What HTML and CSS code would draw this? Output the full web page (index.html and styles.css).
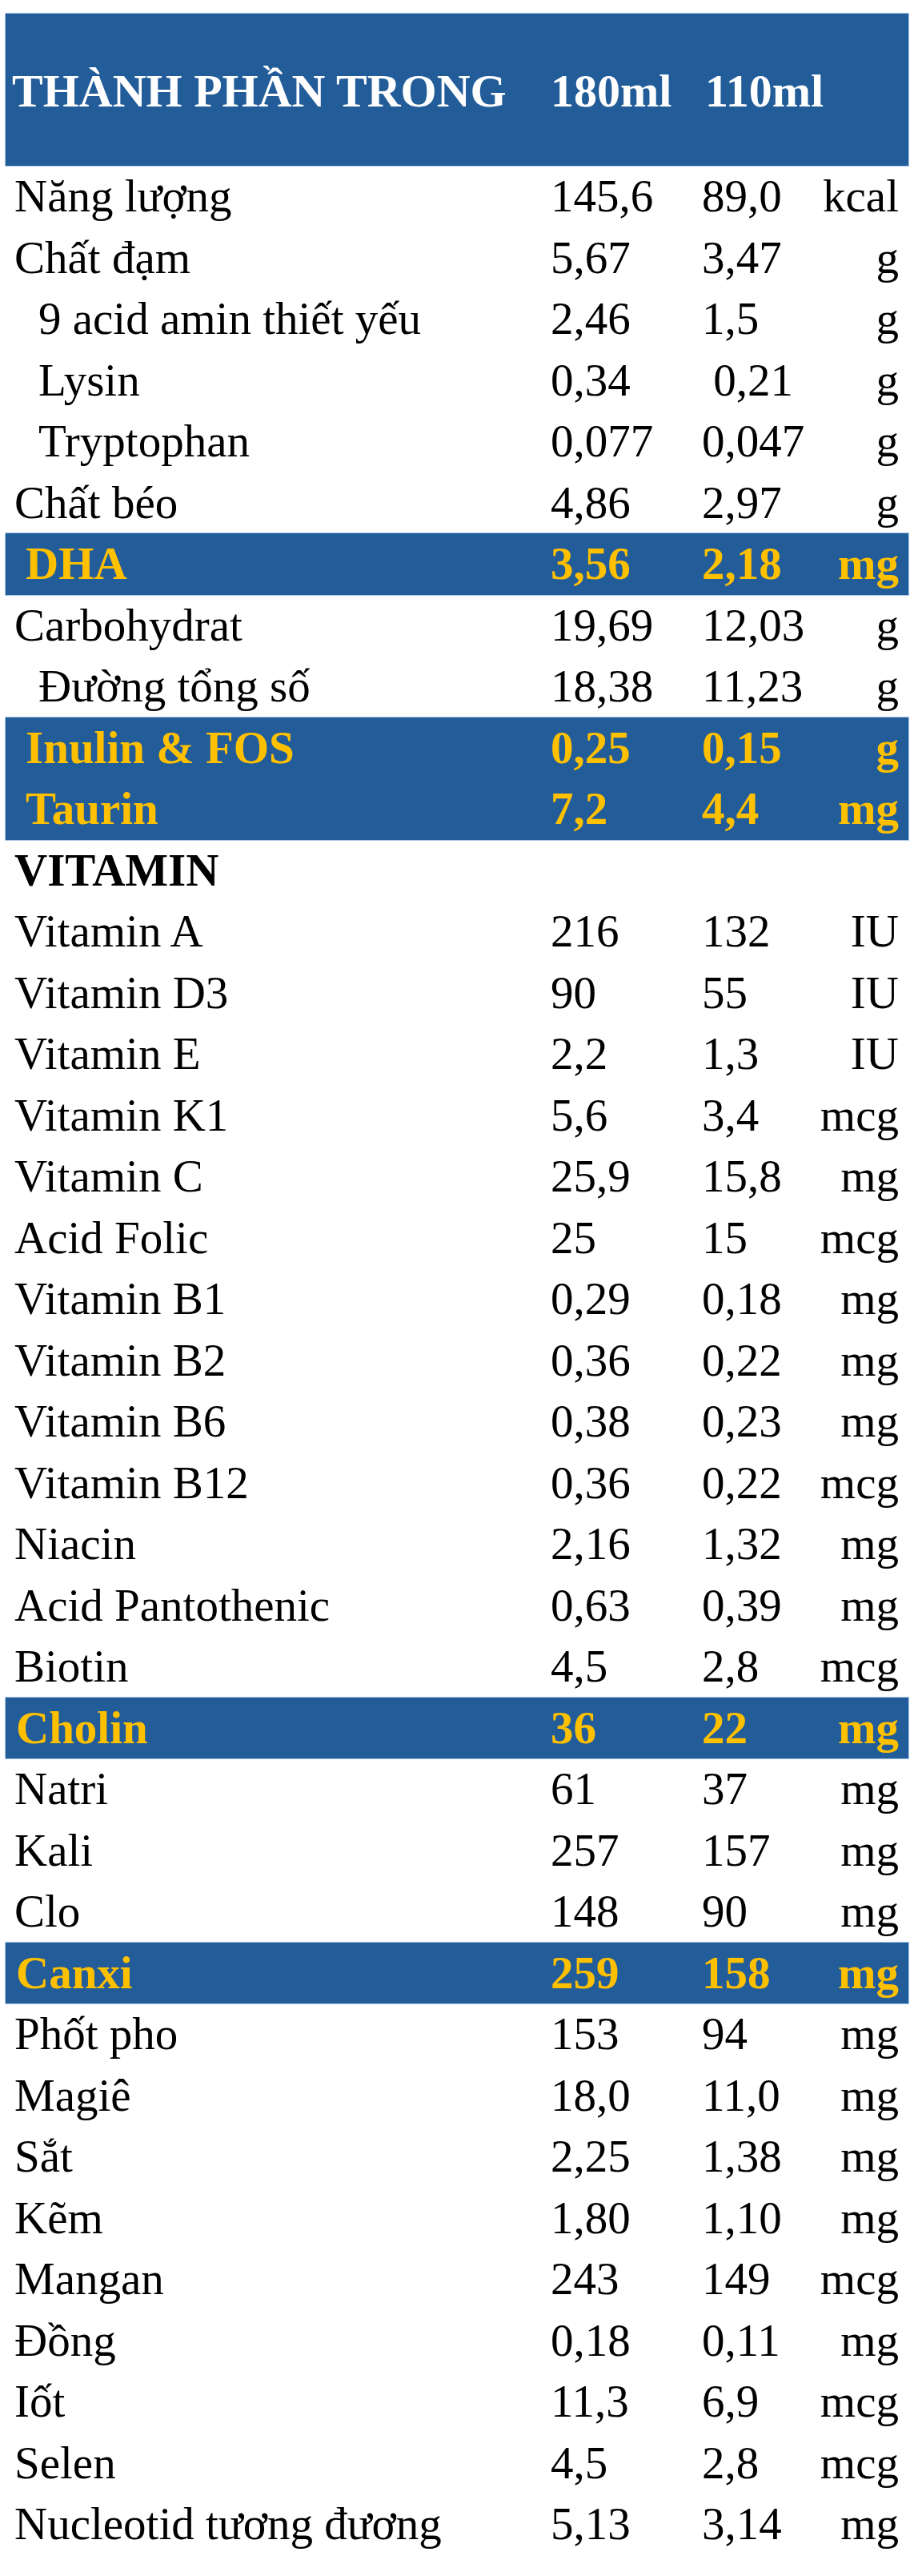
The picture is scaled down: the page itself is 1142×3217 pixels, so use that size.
FILE: index.html
```html
<!DOCTYPE html>
<html lang="vi">
<head>
<meta charset="utf-8">
<title>Thành phần</title>
<link rel="stylesheet" href="styles.css">
</head>
<body>
<div class="table">
  <div class="row head"><div class="label">THÀNH PHẦN TRONG</div><div>180ml</div><div class="head-c3">110ml</div><div class="unit"></div></div>
  <div class="row"><div class="label">Năng lượng</div><div>145,6</div><div>89,0</div><div class="unit">kcal</div></div>
  <div class="row"><div class="label">Chất đạm</div><div>5,67</div><div>3,47</div><div class="unit">g</div></div>
  <div class="row"><div class="label sub">9 acid amin thiết yếu</div><div>2,46</div><div>1,5</div><div class="unit">g</div></div>
  <div class="row"><div class="label sub">Lysin</div><div>0,34</div><div>&nbsp;0,21</div><div class="unit">g</div></div>
  <div class="row"><div class="label sub">Tryptophan</div><div>0,077</div><div>0,047</div><div class="unit">g</div></div>
  <div class="row"><div class="label">Chất béo</div><div>4,86</div><div>2,97</div><div class="unit">g</div></div>
  <div class="band">
    <div class="row hl"><div class="label hl-in">DHA</div><div>3,56</div><div>2,18</div><div class="unit">mg</div></div>
  </div>
  <div class="row"><div class="label">Carbohydrat</div><div>19,69</div><div>12,03</div><div class="unit">g</div></div>
  <div class="row"><div class="label sub">Đường tổng số</div><div>18,38</div><div>11,23</div><div class="unit">g</div></div>
  <div class="band">
    <div class="row hl"><div class="label hl-in">Inulin &amp; FOS</div><div>0,25</div><div>0,15</div><div class="unit">g</div></div>
    <div class="row hl"><div class="label hl-in">Taurin</div><div>7,2</div><div>4,4</div><div class="unit">mg</div></div>
  </div>
  <div class="row"><div class="label section">VITAMIN</div><div></div><div></div><div class="unit"></div></div>
  <div class="row"><div class="label">Vitamin A</div><div>216</div><div>132</div><div class="unit">IU</div></div>
  <div class="row"><div class="label">Vitamin D3</div><div>90</div><div>55</div><div class="unit">IU</div></div>
  <div class="row"><div class="label">Vitamin E</div><div>2,2</div><div>1,3</div><div class="unit">IU</div></div>
  <div class="row"><div class="label">Vitamin K1</div><div>5,6</div><div>3,4</div><div class="unit">mcg</div></div>
  <div class="row"><div class="label">Vitamin C</div><div>25,9</div><div>15,8</div><div class="unit">mg</div></div>
  <div class="row"><div class="label">Acid Folic</div><div>25</div><div>15</div><div class="unit">mcg</div></div>
  <div class="row"><div class="label">Vitamin B1</div><div>0,29</div><div>0,18</div><div class="unit">mg</div></div>
  <div class="row"><div class="label">Vitamin B2</div><div>0,36</div><div>0,22</div><div class="unit">mg</div></div>
  <div class="row"><div class="label">Vitamin B6</div><div>0,38</div><div>0,23</div><div class="unit">mg</div></div>
  <div class="row"><div class="label">Vitamin B12</div><div>0,36</div><div>0,22</div><div class="unit">mcg</div></div>
  <div class="row"><div class="label">Niacin</div><div>2,16</div><div>1,32</div><div class="unit">mg</div></div>
  <div class="row"><div class="label">Acid Pantothenic</div><div>0,63</div><div>0,39</div><div class="unit">mg</div></div>
  <div class="row"><div class="label">Biotin</div><div>4,5</div><div>2,8</div><div class="unit">mcg</div></div>
  <div class="band">
    <div class="row hl"><div class="label hl-flush">Cholin</div><div>36</div><div>22</div><div class="unit">mg</div></div>
  </div>
  <div class="row"><div class="label">Natri</div><div>61</div><div>37</div><div class="unit">mg</div></div>
  <div class="row"><div class="label">Kali</div><div>257</div><div>157</div><div class="unit">mg</div></div>
  <div class="row"><div class="label">Clo</div><div>148</div><div>90</div><div class="unit">mg</div></div>
  <div class="band">
    <div class="row hl"><div class="label hl-flush">Canxi</div><div>259</div><div>158</div><div class="unit">mg</div></div>
  </div>
  <div class="row"><div class="label">Phốt pho</div><div>153</div><div>94</div><div class="unit">mg</div></div>
  <div class="row"><div class="label">Magiê</div><div>18,0</div><div>11,0</div><div class="unit">mg</div></div>
  <div class="row"><div class="label">Sắt</div><div>2,25</div><div>1,38</div><div class="unit">mg</div></div>
  <div class="row"><div class="label">Kẽm</div><div>1,80</div><div>1,10</div><div class="unit">mg</div></div>
  <div class="row"><div class="label">Mangan</div><div>243</div><div>149</div><div class="unit">mcg</div></div>
  <div class="row"><div class="label">Đồng</div><div>0,18</div><div>0,11</div><div class="unit">mg</div></div>
  <div class="row"><div class="label">Iốt</div><div>11,3</div><div>6,9</div><div class="unit">mcg</div></div>
  <div class="row"><div class="label">Selen</div><div>4,5</div><div>2,8</div><div class="unit">mcg</div></div>
  <div class="row"><div class="label">Nucleotid tương đương</div><div>5,13</div><div>3,14</div><div class="unit">mg</div></div>
</div>
</body>
</html>
```

FILE: styles.css
```css
html, body {
  margin: 0;
  padding: 0;
  background: #ffffff;
}

body {
  font-family: "Liberation Serif", "Times New Roman", serif;
  font-size: 57px;
  color: #000000;
}

.table {
  width: 1128px;
  margin-left: 7px;
  padding-top: 17px;
}

.row {
  display: grid;
  grid-template-columns: 681px 189px 1fr auto;
  height: 76.5px;
  line-height: 76.5px;
  padding-right: 12px;
  white-space: nowrap;
}

.label {
  padding-left: 11px;
}

.label.sub {
  padding-left: 41px;
}

.label.section {
  font-weight: bold;
}

.unit {
  text-align: right;
}

.head {
  box-sizing: border-box;
  height: 190px;
  padding-top: 4px;
  line-height: 186px;
  background: #225c99;
  color: #ffffff;
  font-weight: bold;
  font-size: 58px;
  box-shadow: 0 0 0 1px #a8c6e4;
}

.head .label {
  padding-left: 8px;
}

.head-c3 {
  padding-left: 4px;
}

.band {
  background: #225c99;
  box-shadow: 0 0 0 1px #a8c6e4;
}

.hl {
  color: #ffc000;
  font-weight: bold;
}

.label.hl-in {
  padding-left: 25px;
}

.label.hl-flush {
  padding-left: 13px;
}
```
